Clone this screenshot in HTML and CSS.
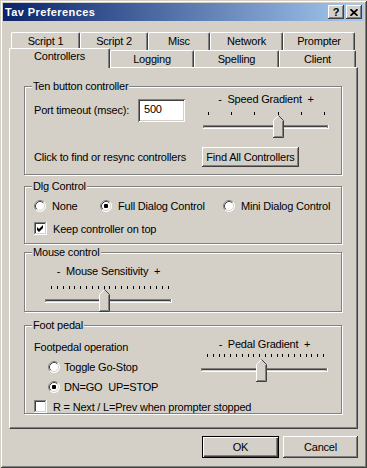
FILE: index.html
```html
<!DOCTYPE html>
<html>
<head>
<meta charset="utf-8">
<title>Tav Preferences</title>
<link rel="stylesheet" href="styles.css">
</head>
<body>
<div class="window">
  <div class="titlebar">
    <span class="title">Tav Preferences</span>
    <div class="caption-btns">
      <div class="cap-btn cap-help">?</div>
      <div class="cap-btn">
        <svg width="8" height="7" viewBox="0 0 8 7"><path d="M0.5 0.2 L7.5 6.8 M7.5 0.2 L0.5 6.8" stroke="#000" stroke-width="1.7" fill="none"/></svg>
      </div>
    </div>
  </div>

  <div class="tabs">
    <div class="tab-row row-back">
      <div class="tab t-script1">Script 1</div>
      <div class="tab t-script2">Script 2</div>
      <div class="tab t-misc">Misc</div>
      <div class="tab t-network">Network</div>
      <div class="tab t-prompter">Prompter</div>
    </div>
    <div class="tab-row row-front">
      <div class="tab active t-controllers">Controllers</div>
      <div class="tab t-logging">Logging</div>
      <div class="tab t-spelling">Spelling</div>
      <div class="tab t-client">Client</div>
    </div>
  </div>

  <div class="panel">
    <div class="group g-ten">
      <div class="legend">Ten button controller</div>
      <div class="row1">
        <div class="port">
          <span class="port-label">Port timeout (msec):</span>
          <div class="textbox">500</div>
        </div>
        <div class="slider slider-speed">
          <div class="slider-label">-  Speed Gradient  +</div>
          <svg width="126" height="34" viewBox="0 0 126 34">
            <path d="M5.5 6v3M28.5 6v3M51.5 6v3M75.5 6v3M98.5 6v3M121.5 6v3" stroke="#000" stroke-width="1"/>
            <rect x="0" y="19" width="126" height="4" fill="#fff"/>
            <rect x="0" y="19" width="125" height="3" fill="#808080"/>
            <rect x="1" y="20" width="123" height="1" fill="#404040"/>
            <rect x="1" y="21" width="123" height="1" fill="#d4d0c8"/>
            <polygon points="70,14.5 75.5,9 81,14.5 81,32 70,32" fill="#d4d0c8"/>
            <path d="M70.5 31 V14.5 L75.5 9.5" stroke="#fff" fill="none"/>
            <path d="M75.5 9.5 L80.5 14.5 V31.5 H70" stroke="#404040" fill="none"/>
            <path d="M79.5 15 V30.5 H71" stroke="#808080" fill="none"/>
          </svg>
        </div>
      </div>
      <div class="row2">
        <span class="row2-text">Click to find or resync controllers</span>
        <div class="btn btn-find">Find All Controllers</div>
      </div>
    </div>

    <div class="group g-dlg">
      <div class="legend">Dlg Control</div>
      <div class="radio-row">
        <div class="opt opt-none">
          <svg class="radio" width="12" height="12" viewBox="0 0 12 12">
            <circle cx="6" cy="6" r="5.5" fill="#fff"/>
            <path d="M2.11 9.89 A5.5 5.5 0 0 1 9.89 2.11" stroke="#808080" fill="none"/>
            <path d="M9.89 2.11 A5.5 5.5 0 0 1 2.11 9.89" stroke="#fff" fill="none"/>
            <path d="M2.82 9.18 A4.5 4.5 0 0 1 9.18 2.82" stroke="#404040" fill="none"/>
            <path d="M9.18 2.82 A4.5 4.5 0 0 1 2.82 9.18" stroke="#d4d0c8" fill="none"/>
          </svg>
          <span>None</span>
        </div>
        <div class="opt opt-full">
          <svg class="radio" width="12" height="12" viewBox="0 0 12 12">
            <circle cx="6" cy="6" r="5.5" fill="#fff"/>
            <path d="M2.11 9.89 A5.5 5.5 0 0 1 9.89 2.11" stroke="#808080" fill="none"/>
            <path d="M9.89 2.11 A5.5 5.5 0 0 1 2.11 9.89" stroke="#fff" fill="none"/>
            <path d="M2.82 9.18 A4.5 4.5 0 0 1 9.18 2.82" stroke="#404040" fill="none"/>
            <path d="M9.18 2.82 A4.5 4.5 0 0 1 2.82 9.18" stroke="#d4d0c8" fill="none"/>
            <rect x="4" y="4" width="4" height="4" rx="1" fill="#000"/>
          </svg>
          <span>Full Dialog Control</span>
        </div>
        <div class="opt">
          <svg class="radio" width="12" height="12" viewBox="0 0 12 12">
            <circle cx="6" cy="6" r="5.5" fill="#fff"/>
            <path d="M2.11 9.89 A5.5 5.5 0 0 1 9.89 2.11" stroke="#808080" fill="none"/>
            <path d="M9.89 2.11 A5.5 5.5 0 0 1 2.11 9.89" stroke="#fff" fill="none"/>
            <path d="M2.82 9.18 A4.5 4.5 0 0 1 9.18 2.82" stroke="#404040" fill="none"/>
            <path d="M9.18 2.82 A4.5 4.5 0 0 1 2.82 9.18" stroke="#d4d0c8" fill="none"/>
          </svg>
          <span>Mini Dialog Control</span>
        </div>
      </div>
      <div class="check-row check-keep">
        <svg class="checkbox" width="13" height="13" viewBox="0 0 13 13">
          <rect x="0" y="0" width="13" height="13" fill="#fff"/>
          <rect x="0" y="0" width="12" height="12" fill="#808080"/>
          <rect x="1" y="1" width="11" height="11" fill="#d4d0c8"/>
          <rect x="1" y="1" width="10" height="10" fill="#404040"/>
          <rect x="2" y="2" width="9" height="9" fill="#fff"/>
          <polygon points="3,5 5,7 9,3 9,6 5,10 3,8" fill="#000"/>
        </svg>
        <span>Keep controller on top</span>
      </div>
    </div>

    <div class="group g-mouse">
      <div class="legend">Mouse control</div>
      <div class="slider slider-mouse">
        <div class="slider-label">-  Mouse Sensitivity  +</div>
        <svg width="127" height="34" viewBox="0 0 127 34">
          <path d="M6.5 8v3M12.5 8v3M18.5 8v3M24.5 8v3M29.5 8v3M35.5 8v3M41.5 8v3M47.5 8v3M53.5 8v3M59.5 8v3M64.5 8v3M70.5 8v3M76.5 8v3M82.5 8v3M88.5 8v3M94.5 8v3M99.5 8v3M105.5 8v3M111.5 8v3M117.5 8v3M123.5 8v3" stroke="#000" stroke-width="1"/>
          <rect x="0" y="21" width="127" height="4" fill="#fff"/>
          <rect x="0" y="21" width="126" height="3" fill="#808080"/>
          <rect x="1" y="22" width="124" height="1" fill="#404040"/>
          <rect x="1" y="23" width="124" height="1" fill="#d4d0c8"/>
          <polygon points="54,16.5 59.5,11 65,16.5 65,34 54,34" fill="#d4d0c8"/>
          <path d="M54.5 33 V16.5 L59.5 11.5" stroke="#fff" fill="none"/>
          <path d="M59.5 11.5 L64.5 16.5 V33.5 H54" stroke="#404040" fill="none"/>
          <path d="M63.5 17 V32.5 H55" stroke="#808080" fill="none"/>
        </svg>
      </div>
    </div>

    <div class="group g-foot">
      <div class="legend">Foot pedal</div>
      <div class="foot-main">
        <div class="foot-left">
          <div class="foot-title">Footpedal operation</div>
          <div class="foot-radio fr1">
            <svg class="radio" width="12" height="12" viewBox="0 0 12 12">
              <circle cx="6" cy="6" r="5.5" fill="#fff"/>
              <path d="M2.11 9.89 A5.5 5.5 0 0 1 9.89 2.11" stroke="#808080" fill="none"/>
              <path d="M9.89 2.11 A5.5 5.5 0 0 1 2.11 9.89" stroke="#fff" fill="none"/>
              <path d="M2.82 9.18 A4.5 4.5 0 0 1 9.18 2.82" stroke="#404040" fill="none"/>
              <path d="M9.18 2.82 A4.5 4.5 0 0 1 2.82 9.18" stroke="#d4d0c8" fill="none"/>
            </svg>
            <span>Toggle Go-Stop</span>
          </div>
          <div class="foot-radio fr2">
            <svg class="radio" width="12" height="12" viewBox="0 0 12 12">
              <circle cx="6" cy="6" r="5.5" fill="#fff"/>
              <path d="M2.11 9.89 A5.5 5.5 0 0 1 9.89 2.11" stroke="#808080" fill="none"/>
              <path d="M9.89 2.11 A5.5 5.5 0 0 1 2.11 9.89" stroke="#fff" fill="none"/>
              <path d="M2.82 9.18 A4.5 4.5 0 0 1 9.18 2.82" stroke="#404040" fill="none"/>
              <path d="M9.18 2.82 A4.5 4.5 0 0 1 2.82 9.18" stroke="#d4d0c8" fill="none"/>
              <rect x="4" y="4" width="4" height="4" rx="1" fill="#000"/>
            </svg>
            <span class="pre">DN=GO  UP=STOP</span>
          </div>
        </div>
        <div class="slider slider-pedal">
          <div class="slider-label">-  Pedal Gradient  +</div>
          <svg width="127" height="31" viewBox="0 0 127 31">
            <path d="M6.5 3v3M12.5 3v3M18.5 3v3M23.5 3v3M29.5 3v3M35.5 3v3M41.5 3v3M47.5 3v3M52.5 3v3M58.5 3v3M64.5 3v3M70.5 3v3M76.5 3v3M81.5 3v3M87.5 3v3M93.5 3v3M99.5 3v3M105.5 3v3M110.5 3v3M116.5 3v3M122.5 3v3" stroke="#000" stroke-width="1"/>
            <rect x="0" y="17" width="127" height="4" fill="#fff"/>
            <rect x="0" y="17" width="126" height="3" fill="#808080"/>
            <rect x="1" y="18" width="124" height="1" fill="#404040"/>
            <rect x="1" y="19" width="124" height="1" fill="#d4d0c8"/>
            <polygon points="55,13.5 60.5,8 66,13.5 66,31 55,31" fill="#d4d0c8"/>
            <path d="M55.5 30 V13.5 L60.5 8.5" stroke="#fff" fill="none"/>
            <path d="M60.5 8.5 L65.5 13.5 V30.5 H55" stroke="#404040" fill="none"/>
            <path d="M64.5 14 V29.5 H56" stroke="#808080" fill="none"/>
          </svg>
        </div>
      </div>
      <div class="check-row check-foot">
        <svg class="checkbox" width="13" height="13" viewBox="0 0 13 13">
          <rect x="0" y="0" width="13" height="13" fill="#fff"/>
          <rect x="0" y="0" width="12" height="12" fill="#808080"/>
          <rect x="1" y="1" width="11" height="11" fill="#d4d0c8"/>
          <rect x="1" y="1" width="10" height="10" fill="#404040"/>
          <rect x="2" y="2" width="9" height="9" fill="#fff"/>
        </svg>
        <span>R = Next / L=Prev when prompter stopped</span>
      </div>
    </div>
  </div>

  <div class="buttons">
    <div class="btn btn-default">OK</div>
    <div class="btn btn-cancel">Cancel</div>
  </div>
</div>
</body>
</html>
```

FILE: styles.css
```css
html, body {
  margin: 0;
  padding: 0;
}

body {
  background: #d4d0c8;
  font-family: "Liberation Sans", Arial, sans-serif;
  font-size: 11px;
  letter-spacing: -0.2px;
  color: #000;
}

svg {
  display: block;
  flex: none;
}

.window {
  width: 367px;
  height: 468px;
  box-sizing: border-box;
  padding: 3px;
  display: flex;
  flex-direction: column;
  background: #d4d0c8;
  box-shadow:
    inset 1px 1px 0 #d4d0c8,
    inset -1px -1px 0 #404040,
    inset 2px 2px 0 #fff,
    inset -2px -2px 0 #808080;
}

/* Title bar */
.titlebar {
  flex: none;
  height: 18px;
  display: flex;
  align-items: center;
  padding: 0 2px;
  background: linear-gradient(to right, #0a246a, #a6caf0);
}

.title {
  color: #fff;
  font-weight: bold;
  letter-spacing: 0.4px;
}

.caption-btns {
  margin-left: auto;
  display: flex;
  gap: 2px;
}

.cap-btn {
  width: 16px;
  height: 14px;
  box-sizing: border-box;
  background: #d4d0c8;
  box-shadow:
    inset -1px -1px 0 #404040,
    inset 1px 1px 0 #fff,
    inset -2px -2px 0 #808080;
  display: flex;
  align-items: center;
  justify-content: center;
}

.cap-help {
  font-weight: bold;
  font-size: 11px;
  letter-spacing: 0;
  line-height: 14px;
  padding-bottom: 1px;
}

/* Tabs */
.tabs {
  flex: none;
  padding-top: 11px;
}

.tab-row {
  display: flex;
}

.row-back {
  margin-left: 8px;
}

.row-front {
  margin-left: 6px;
  margin-top: -2px;
  height: 19px;
  align-items: flex-start;
}

.tab {
  box-sizing: border-box;
  height: 18px;
  background: #d4d0c8;
  border-top: 1px solid #fff;
  border-left: 1px solid #fff;
  border-right: 1px solid #404040;
  box-shadow: inset -1px 0 0 #808080;
  border-radius: 2px 2px 0 0;
  display: flex;
  align-items: center;
  justify-content: center;
  line-height: 13px;
}

.row-front .tab {
  height: 17px;
  margin-top: 2px;
}

.row-front .tab.active {
  height: 20px;
  margin-top: 0;
  margin-bottom: -1px;
  align-items: flex-start;
  padding-top: 1px;
  position: relative;
  z-index: 2;
}

.t-script1 { width: 69px; }
.t-script2 { width: 68px; }
.t-misc { width: 62px; }
.t-network { width: 73px; }
.t-prompter { width: 72px; }
.t-controllers { width: 101px; }
.t-logging { width: 84px; }
.t-spelling { width: 85px; }
.t-client { width: 77px; }

/* Panel */
.panel {
  flex: none;
  margin-left: 6px;
  width: 349px;
  height: 362px;
  box-sizing: border-box;
  border-top: 1px solid #fff;
  border-left: 1px solid #fff;
  border-right: 1px solid #404040;
  border-bottom: 1px solid #404040;
  box-shadow: inset -1px -1px 0 #808080;
  padding: 18px 0 0 14px;
  display: flex;
  flex-direction: column;
}

/* Group boxes */
.group {
  flex: none;
  box-sizing: border-box;
  width: 318px;
  border: 1px solid #808080;
  box-shadow: 1px 1px 0 #fff, inset 1px 1px 0 #fff;
  padding-left: 9px;
  display: flex;
  flex-direction: column;
}

.legend {
  align-self: flex-start;
  margin: -7px 0 0 -2px;
  padding: 0 1px;
  background: #d4d0c8;
  line-height: 13px;
}

.g-ten { height: 89px; }
.g-dlg { height: 58px; margin-top: 11px; }
.g-mouse { height: 60px; margin-top: 8px; }
.g-foot { height: 89px; margin-top: 13px; }

/* Ten button controller */
.row1 {
  display: flex;
  height: 47px;
}

.port {
  width: 169px;
  box-sizing: border-box;
  padding-top: 6px;
  display: flex;
  align-items: flex-start;
}

.port-label {
  width: 104px;
  line-height: 23px;
}

.textbox {
  width: 47px;
  height: 23px;
  box-sizing: border-box;
  background: #fff;
  padding: 4px 0 0 6px;
  line-height: 13px;
  box-shadow:
    inset 1px 1px 0 #808080,
    inset -1px -1px 0 #fff,
    inset 2px 2px 0 #404040,
    inset -2px -2px 0 #d4d0c8;
}

.slider {
  display: flex;
  flex-direction: column;
}

.slider-label {
  line-height: 13px;
  text-align: center;
  white-space: pre;
}

.slider-speed { width: 126px; }

.row2 {
  display: flex;
  align-items: center;
  height: 20px;
  margin-top: 7px;
}

.row2-text {
  width: 168px;
}

.btn {
  box-sizing: border-box;
  background: #d4d0c8;
  display: flex;
  align-items: center;
  justify-content: center;
  box-shadow:
    inset -1px -1px 0 #404040,
    inset 1px 1px 0 #fff,
    inset -2px -2px 0 #808080;
}

.btn-find {
  width: 97px;
  height: 20px;
}

/* Dlg control */
.radio-row {
  display: flex;
  align-items: center;
  height: 13px;
  margin-top: 6px;
}

.opt {
  display: flex;
  align-items: center;
  gap: 6px;
}

.opt-none { width: 66px; }
.opt-full { width: 123px; }

.check-row {
  display: flex;
  align-items: center;
  gap: 6px;
  height: 13px;
}

.check-keep { margin-top: 10px; }

/* Mouse control */
.slider-mouse {
  width: 127px;
  margin-left: 11px;
  margin-top: 6px;
}

/* Foot pedal */
.foot-main {
  display: flex;
}

.foot-left {
  width: 167px;
  display: flex;
  flex-direction: column;
}

.foot-title {
  line-height: 13px;
  margin-top: 9px;
}

.foot-radio {
  display: flex;
  align-items: center;
  gap: 4px;
  height: 13px;
  margin-left: 14px;
}

.fr1 { margin-top: 6px; }
.fr2 { margin-top: 7px; }

.pre { white-space: pre; }

.slider-pedal {
  width: 127px;
  margin-top: 6px;
}

.check-foot { margin-top: 7px; }

/* Bottom buttons */
.buttons {
  flex: none;
  display: flex;
  justify-content: flex-end;
  gap: 4px;
  margin-top: 7px;
  padding-right: 6px;
}

.btn-default {
  width: 77px;
  height: 22px;
  box-shadow:
    inset 0 0 0 1px #000,
    inset 2px 2px 0 #fff,
    inset -2px -2px 0 #404040,
    inset -3px -3px 0 #808080;
}

.btn-cancel {
  width: 75px;
  height: 22px;
}
```
